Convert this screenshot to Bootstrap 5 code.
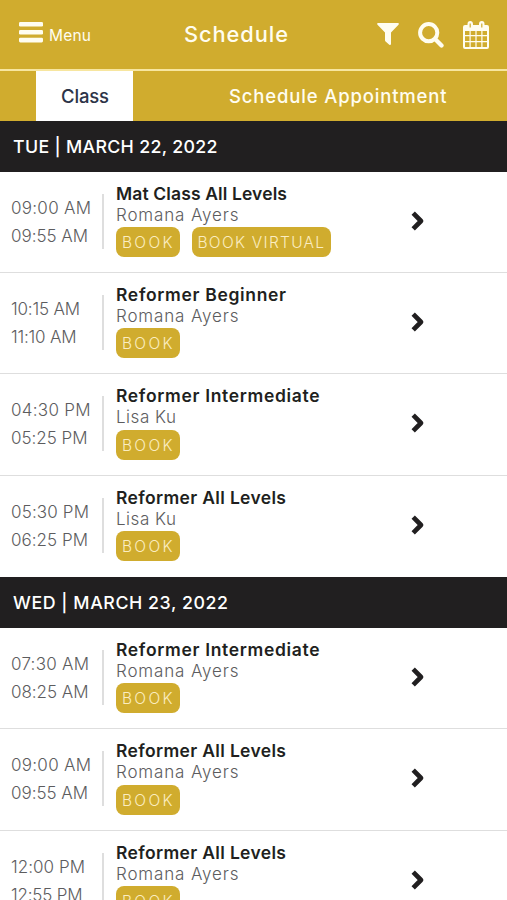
<!DOCTYPE html>
<html lang="en">
<head>
<meta charset="utf-8">
<meta name="viewport" content="width=device-width, initial-scale=1">
<title>Schedule</title>
<link href="https://cdn.jsdelivr.net/npm/bootstrap@5.3.0/dist/css/bootstrap.min.css" rel="stylesheet">
<style>
:root{--gold:#d0ac2e;--ink:#211f20}
body{font-family:Inter,"Open Sans",sans-serif;color:var(--ink);background:#fff;overflow:hidden;height:900px}
.topbar{height:71px;background:var(--gold);border-bottom:2px solid #f7e6a0;color:#fffdf0;padding:0 18px 0 19px;display:grid;grid-template-columns:165px 1fr 112px}
.topbar svg,.go svg{display:block;flex:none}
.topbar .burger{margin-top:-5px}
.menu-label{font-size:15.500px;margin:2px 0 0 6px}
.page-title{font-size:21.800px;font-weight:500;line-height:68px}
.tabs{height:50px;background:var(--gold);padding-left:36px;margin:0}
.tabs .nav-link{font-size:18.500px;font-weight:500;line-height:51px;padding:0;color:#fffdf0;border-radius:0;white-space:nowrap}
.tabs .nav-link.active{background:#fff;color:#2c3448;width:97px;height:50px;padding-left:25px}
.tabs .appt{margin-left:96px}
.day{height:50.6px;background:var(--ink);color:#fff;font-size:17.8px;line-height:51px;padding-left:13px;font-weight:500}
.day-2{line-height:52px}
.slot{height:101.4px;border-bottom:1px solid #dedede}
.slot.last{border-bottom:0}
.times{width:102px;height:56px;margin-top:22px;padding-left:11px;font-size:17px;font-weight:300;color:#5c5c5e;line-height:28px;white-space:nowrap}
.times + .rule{width:2px;height:55px;margin-top:22px;background:#dedede}
.info{width:307px;padding:10px 0 0 12px;white-space:nowrap}
.what{font-size:17.5px;font-weight:600;line-height:23px}
.who{font-size:17px;font-weight:300;line-height:20px;padding-bottom:2.500px;color:#5c5c5e}
.book{height:30px;line-height:31px;padding:0 0 0 6px;border:0;border-radius:8px;background:var(--gold);color:#fbedc0;font-size:15.500px;font-weight:300;width:63.500px;text-align:left}
.book.virtual{width:139.500px;margin-left:12px}
.go{padding-top:39px}
</style>
</head>
<body>
<header class="topbar">
  <div class="d-flex align-items-center">
    <svg class="burger" width="24" height="21" viewBox="0 0 24 21" fill="currentColor"><rect width="24" height="4.600" rx="1.300"/><rect y="7.900" width="24" height="4.600" rx="1.300"/><rect y="15.800" width="24" height="4.600" rx="1.300"/></svg>
    <span class="menu-label"><span data-w="42">Menu</span></span>
  </div>
  <div class="page-title"><span data-w="104">Schedule</span></div>
  <div class="d-flex align-items-center justify-content-between">
    <svg width="22" height="23" viewBox="0 0 22 23" fill="currentColor"><path d="M1 0h20q1.400.5.500 1.700L14 9.500V21q-.3 1.600-1.700.800L8.600 18.500Q8 18 8 17V9.500L.5 1.700Q-.4.400 1 0z"/></svg>
    <svg width="26" height="26" viewBox="0 0 26 26" fill="none" stroke="currentColor"><circle cx="10.700" cy="10.700" r="8.600" stroke-width="4"/><path d="M17.300 17.300l6.200 6.200" stroke-width="4.300" stroke-linecap="round"/></svg>
    <svg width="26" height="28" viewBox="0 0 26 28"><path fill="currentColor" fill-rule="evenodd" d="M2 4h2.500V3Q4.500 0 7.200 0T10 3v1h6V3q0-3 2.800-3t2.700 3v1H24q2 0 2 2v20q0 2-2 2H2q-2 0-2-2V6q0-2 2-2zM2 10v4h4.500v-4zM7.700 10v4h4.700v-4zM13.600 10v4h4.700v-4zM19.500 10v4H24v-4zM2 15.200v4.700h4.500v-4.700zM7.700 15.200v4.700h4.700v-4.700zM13.600 15.200v4.700h4.700v-4.700zM19.500 15.200v4.700H24v-4.700zM2 21.200V26h4.500v-4.800zM7.700 21.200V26h4.700v-4.800zM13.600 21.200V26h4.700v-4.800zM19.500 21.200V26H24v-4.800zM6.600 2.500v4h1.200v-4zM18.200 2.500v4h1.200v-4z"/></svg>
  </div>
</header>
<nav class="tabs nav flex-nowrap">
  <a class="nav-link active" href="#"><span data-w="48">Class</span></a>
  <a class="nav-link appt" href="#"><span data-w="217.5">Schedule Appointment</span></a>
</nav>
<main id="list"></main>
<script src="https://cdn.jsdelivr.net/npm/bootstrap@5.3.0/dist/js/bootstrap.bundle.min.js"></script>
<script>
// Drawn width of each label in px; tracking is derived from it.
const widths={"09:00 AM":80,"09:55 AM":77,"10:15 AM":69,"11:10 AM":65.5,"04:30 PM":79.5,"05:25 PM":76.5,"05:30 PM":78,"06:25 PM":77,"07:30 AM":78,"08:25 AM":77.5,"12:00 PM":74,"12:55 PM":71.5,
 "Mat Class All Levels":171,"Reformer Beginner":170,"Reformer Intermediate":203.5,"Reformer All Levels":170,"Romana Ayers":122.5,"Lisa Ku":60,"BOOK":50.5,"BOOK VIRTUAL":126.5,"TUE | MARCH 22, 2022":204.5,"WED | MARCH 23, 2022":215};
const label=s=>`<span data-w="${widths[s]}">${s}</span>`;
const days=[
 ["TUE | MARCH 22, 2022",[["09:00 AM","09:55 AM","Mat Class All Levels","Romana Ayers",1],["10:15 AM","11:10 AM","Reformer Beginner","Romana Ayers"],["04:30 PM","05:25 PM","Reformer Intermediate","Lisa Ku"],["05:30 PM","06:25 PM","Reformer All Levels","Lisa Ku"]]],
 ["WED | MARCH 23, 2022",[["07:30 AM","08:25 AM","Reformer Intermediate","Romana Ayers"],["09:00 AM","09:55 AM","Reformer All Levels","Romana Ayers"],["12:00 PM","12:55 PM","Reformer All Levels","Romana Ayers"]]]];
document.getElementById("list").innerHTML=days.map(([d,s],n)=>`<section><h2 class="day day-${n+1} m-0">${label(d)}</h2>`+s.map((r,i)=>`<article class="slot d-flex${i==3?" last":""}"><div class="times"><div>${label(r[0])}</div><div>${label(r[1])}</div></div><div class="rule"></div><div class="info"><div class="what">${label(r[2])}</div><div class="who">${label(r[3])}</div><div class="d-flex"><button class="book">${label("BOOK")}</button>${r[4]?`<button class="book virtual">${label("BOOK VIRTUAL")}</button>`:""}</div></div><div class="go"><svg width="14" height="20" viewBox="0 0 14 20" fill="none" stroke="#211f20" stroke-width="4.700" stroke-linejoin="round"><path d="M2.200 2.200l7.800 7.800-7.800 7.800"/></svg></div></article>`).join("")+"</section>").join("");
document.querySelectorAll("[data-w]").forEach(e=>{
  const natural=e.getBoundingClientRect().width;
  e.style.letterSpacing=((+e.dataset.w-natural)/(e.textContent.length-1)).toFixed(3)+"px";
});
</script>
</body>
</html>
